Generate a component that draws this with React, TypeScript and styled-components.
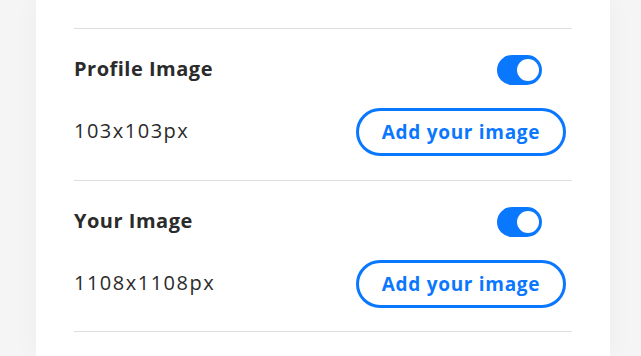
import styled, { createGlobalStyle } from "styled-components";

const GlobalStyle = createGlobalStyle`
  html, body {
    margin: 0;
    padding: 0;
    background: #f5f5f5;
    font-family: "Open Sans", "Noto Sans", sans-serif;
    overflow: hidden;
  }
`;

const Page = styled.div`
  display: flex;
  padding: 0 31px 0 36px;
  height: 356px;
`;

const Card = styled.div`
  flex: 1;
  background: #fff;
  padding: 28px 38px 0;
  box-shadow: 0 0 24px rgba(0, 0, 0, 0.04);
`;

const Section = styled.div`
  border-top: 1px solid #dedede;
  padding: 26px 0 23.5px;
  display: flex;
  flex-direction: column;
  gap: 23px;
`;

const Row = styled.div`
  display: flex;
  align-items: center;
  justify-content: space-between;
`;

const Title = styled.span`
  font-size: 20px;
  font-weight: 700;
  letter-spacing: 0.5px;
  color: #2b2b2b;
  margin-top: -3px;
`;

const Size = styled.span`
  font-size: 20px;
  letter-spacing: 1.5px;
  color: #2b2b2b;
  margin-top: -3px;
`;

const Toggle = styled.div<{ on: boolean }>`
  width: 45px;
  height: 30px;
  margin-right: 30px;
  border-radius: 15px;
  background: ${(p) => (p.on ? "#0a77ff" : "#ccc")};
  position: relative;
  &::after {
    content: "";
    position: absolute;
    top: 4px;
    left: ${(p) => (p.on ? "20px" : "4px")};
    width: 22px;
    height: 22px;
    border-radius: 50%;
    background: #fff;
  }
`;

const AddButton = styled.button`
  width: 210px;
  height: 48px;
  margin-right: 6px;
  border: 3px solid #0a77ff;
  border-radius: 24px;
  background: #fff;
  color: #0a77ff;
  font-family: inherit;
  font-size: 19px;
  font-weight: 700;
  letter-spacing: 0.7px;
  cursor: pointer;
`;

const images = [
  { name: "Profile Image", size: "103x103px" },
  { name: "Your Image", size: "1108x1108px" },
];

export default function App() {
  return (
    <>
      <GlobalStyle />
      <Page>
        <Card>
          {images.map((img) => (
            <Section key={img.name}>
              <Row>
                <Title>{img.name}</Title>
                <Toggle on />
              </Row>
              <Row>
                <Size>{img.size}</Size>
                <AddButton>Add your image</AddButton>
              </Row>
            </Section>
          ))}
          <Section />
        </Card>
      </Page>
    </>
  );
}
